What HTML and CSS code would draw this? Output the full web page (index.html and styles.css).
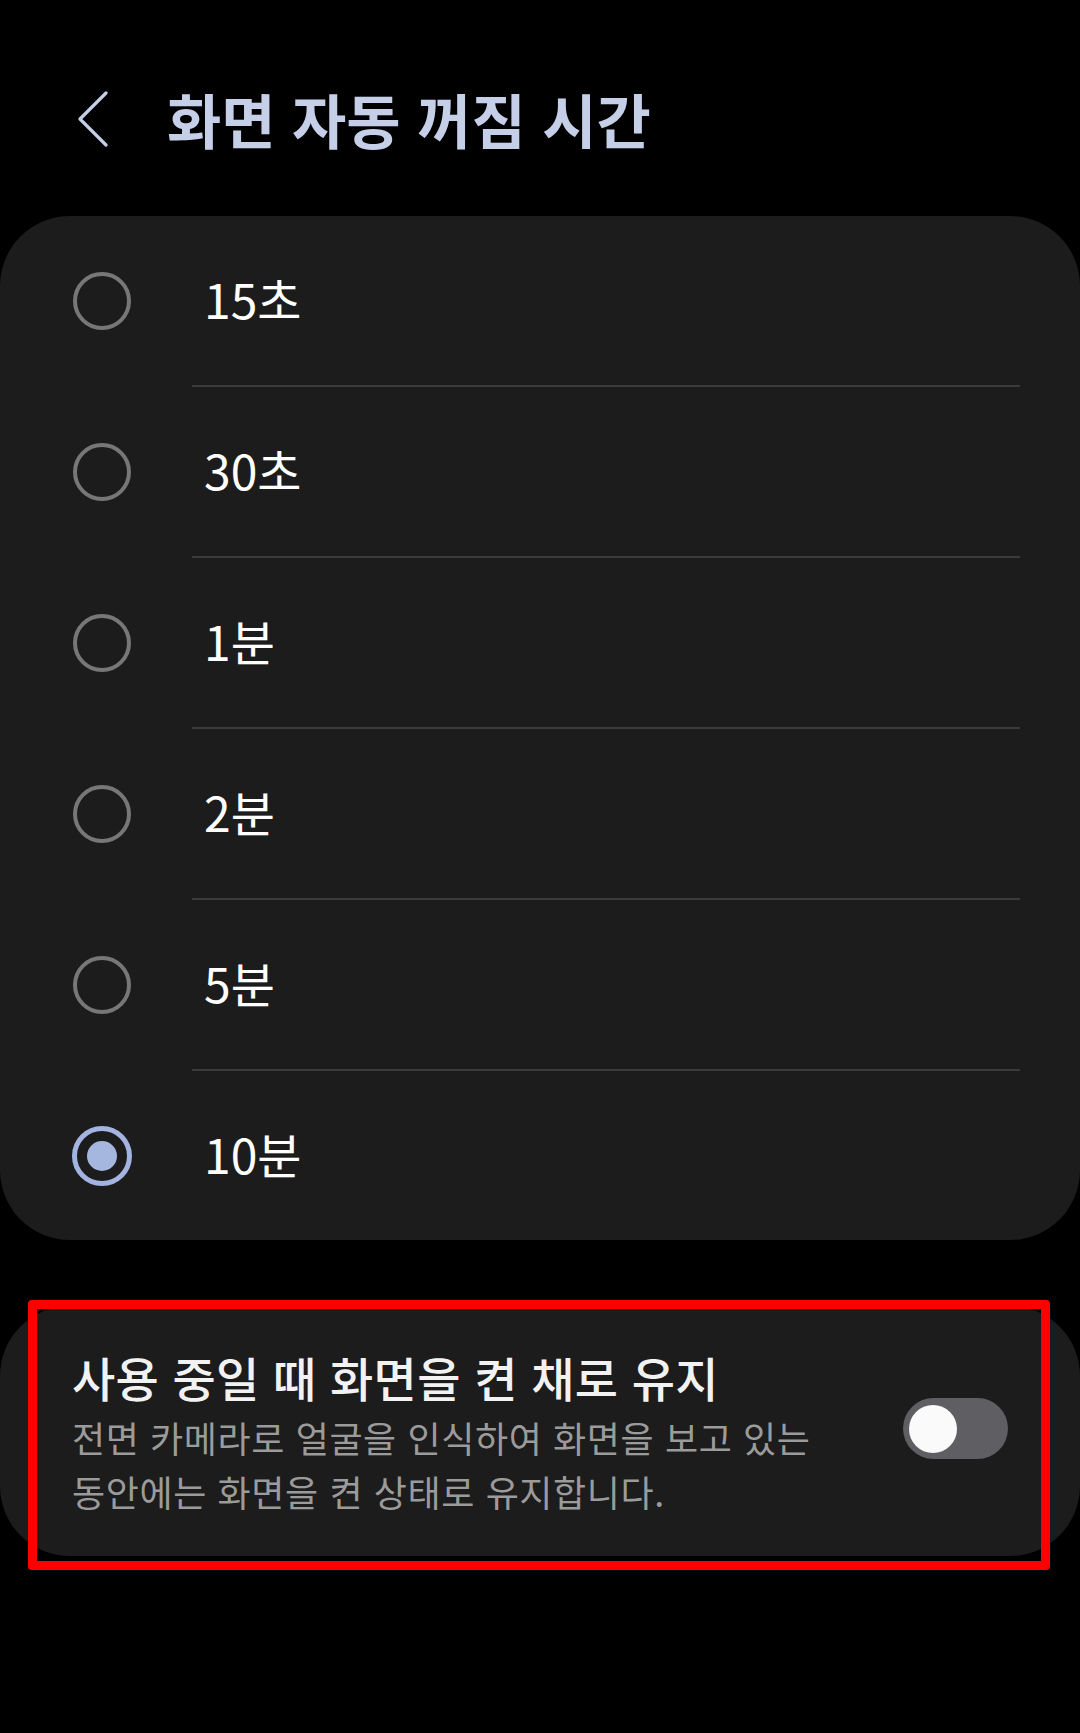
FILE: index.html
```html
<!DOCTYPE html>
<html lang="ko">
<head>
    <meta charset="UTF-8">
    <meta name="viewport" content="width=device-width, initial-scale=1.0">
    <title>화면 자동 꺼짐 시간</title>
    <link rel="stylesheet" href="styles.css">
</head>
<body>

    <header class="top-bar">
        <svg class="back" viewBox="0 0 30 56" width="30" height="56">
            <polyline points="28,2 2,28 28,54" fill="none" stroke="#c6cfe8" stroke-width="3.2" stroke-linecap="round" stroke-linejoin="round"/>
        </svg>
        <h1 class="title">화면 자동 꺼짐 시간</h1>
    </header>

    <!-- timeout options -->
    <div class="card options">
        <div class="option">
            <span class="radio"></span>
            <span class="label">15초</span>
        </div>
        <div class="divider"></div>
        <div class="option">
            <span class="radio"></span>
            <span class="label">30초</span>
        </div>
        <div class="divider"></div>
        <div class="option">
            <span class="radio"></span>
            <span class="label">1분</span>
        </div>
        <div class="divider"></div>
        <div class="option">
            <span class="radio"></span>
            <span class="label">2분</span>
        </div>
        <div class="divider"></div>
        <div class="option">
            <span class="radio"></span>
            <span class="label">5분</span>
        </div>
        <div class="divider"></div>
        <div class="option">
            <span class="radio on"><span class="dot"></span></span>
            <span class="label">10분</span>
        </div>
    </div>

    <!-- keep screen on -->
    <div class="card keep-on">
        <div class="keep-text">
            <div class="keep-title">사용 중일 때 화면을 켠 채로 유지</div>
            <div class="keep-desc">전면 카메라로 얼굴을 인식하여 화면을 보고 있는 동안에는 화면을 켠 상태로 유지합니다.</div>
        </div>
        <span class="switch"><span class="knob"></span></span>
        <div class="highlight"></div>
    </div>

</body>
</html>
```

FILE: styles.css
```css
body {
    margin: 0;
    padding: 0;
    background: #000;
    font-family: "Noto Sans CJK KR", "Noto Sans", sans-serif;
    width: 1080px;
    min-height: 1733px;
}
.top-bar {
    height: 216px;
    box-sizing: border-box;
    padding: 84px 0 0 78px;
    display: flex;
    align-items: flex-start;
}
.back {
    display: block;
    margin-top: 7px;
}
.title {
    margin: 0 0 0 59px;
    font-size: 59px;
    line-height: 70px;
    font-weight: 700;
    color: #c6cfe8;
}
.card {
    background-color: #1c1c1c;
    border-radius: 70px;
}
.options {
    display: flex;
    flex-direction: column;
}
.option {
    height: 169px;
    display: flex;
    align-items: center;
    padding-left: 73px;
}
.divider {
    height: 2px;
    margin: 0 60px 0 192px;
    background-color: #3b3b3b;
}
.radio {
    width: 58px;
    height: 58px;
    box-sizing: border-box;
    border: 4px solid #777;
    border-radius: 50%;
    display: flex;
    align-items: center;
    justify-content: center;
    flex-shrink: 0;
}
.radio.on {
    width: 60px;
    height: 60px;
    margin-left: -1px;
    border: 5px solid #a2b4df;
}
.dot {
    width: 30px;
    height: 30px;
    border-radius: 50%;
    background-color: #a5b6df;
}
.label {
    margin-left: 73px;
    padding-bottom: 6px;
    font-size: 48px;
    color: #fff;
    line-height: 60px;
}
.radio.on + .label {
    margin-left: 72px;
}
.keep-on {
    position: relative;
    margin-top: 66px;
    height: 250px;
    box-sizing: border-box;
    padding: 42px 72px 0 72px;
    display: flex;
    align-items: flex-start;
}
.keep-text {
    flex: 1;
    padding-right: 40px;
    word-break: keep-all;
}
.keep-title {
    font-size: 47px;
    line-height: 58px;
    font-weight: 500;
    color: #f2f2f2;
    letter-spacing: 0.3px;
}
.keep-desc {
    margin-top: 4px;
    font-size: 36px;
    line-height: 54px;
    letter-spacing: 0.6px;
    color: #9b9b9b;
}
.switch {
    margin-top: 50px;
    width: 105px;
    height: 61px;
    border-radius: 31px;
    background-color: #5f5f63;
    display: flex;
    align-items: center;
    padding-left: 6px;
    box-sizing: border-box;
    flex-shrink: 0;
}
.knob {
    width: 48px;
    height: 48px;
    border-radius: 50%;
    background-color: #fafafa;
}
/* red annotation frame drawn over the card */
.highlight {
    position: absolute;
    left: 28px;
    right: 30px;
    top: -6px;
    bottom: -14px;
    border: 9px solid #ff0000;
    border-radius: 4px;
}
```
